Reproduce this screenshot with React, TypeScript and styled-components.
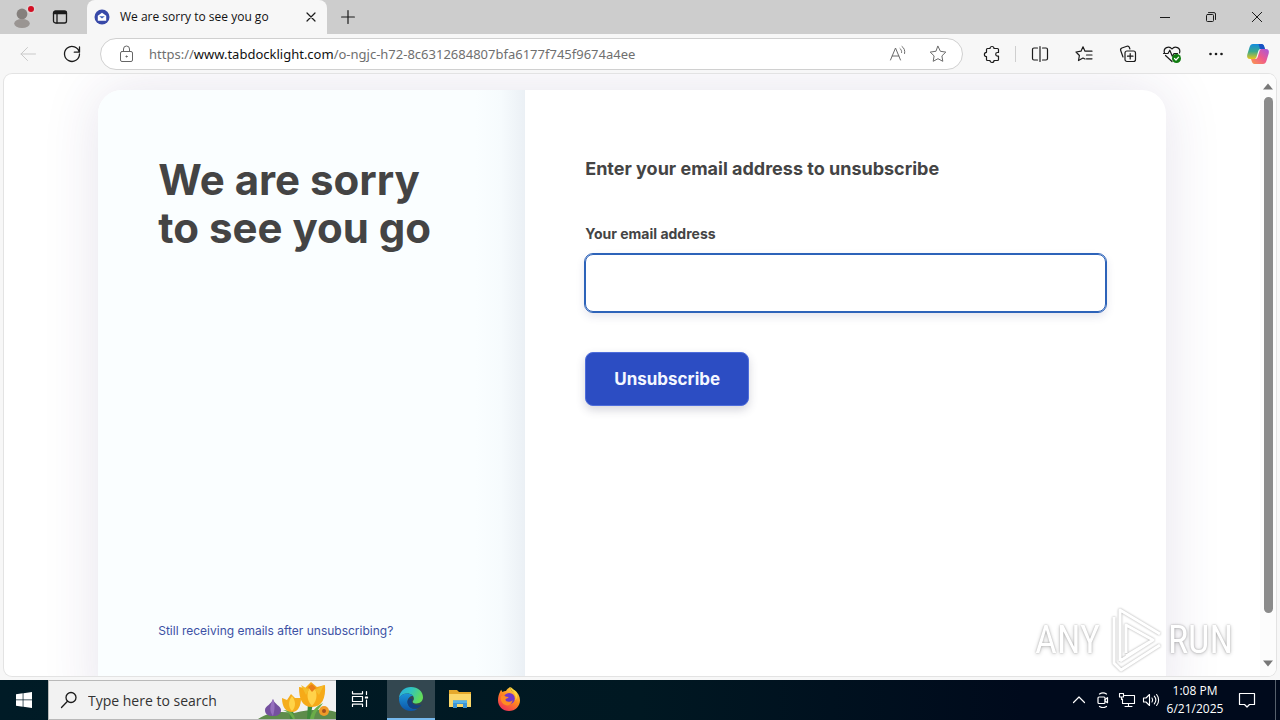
import React from "react";
import styled, { createGlobalStyle } from "styled-components";

const UI = `"Open Sans", "Noto Sans", sans-serif`;
const BODY = `Inter, "Liberation Sans", sans-serif`;

const GlobalStyle = createGlobalStyle`
  *, *::before, *::after { box-sizing: border-box; }
  body { margin: 0; background: #f7f7f7; }
  button, input { font: inherit; color: inherit; }
  button { background: none; border: 0; padding: 0; }
`;

const Desktop = styled.div`
  display: flex;
  flex-direction: column;
  height: 100vh;
  overflow: hidden;
  font-family: ${UI};
  color: #1b1b1b;
`;

/* ---------- browser chrome ---------- */

const TabStrip = styled.header`
  display: flex;
  height: 34px;
  flex: none;
  background: #cdcdcd;
`;

const IconButton = styled.button<{ $width?: number; $color?: string }>`
  display: flex;
  flex: none;
  align-items: center;
  justify-content: center;
  width: ${(p) => p.$width ?? 44}px;
  color: ${(p) => p.$color ?? "#1b1b1b"};
`;

const StripStart = styled.div`
  display: flex;
  width: 87px;
  padding-left: 2px;
`;

const Tab = styled.div`
  display: flex;
  align-items: center;
  gap: 10px;
  width: 240px;
  padding: 0 4px 0 7px;
  background: #f7f7f7;
  border-radius: 8px 8px 0 0;
`;

const TabTitle = styled.span`
  flex: 1;
  font-size: 12px;
  line-height: 16px;
  color: #111;
  white-space: nowrap;
`;

const WindowControls = styled.div`
  display: flex;
  margin-left: auto;
`;

const Toolbar = styled.nav`
  display: flex;
  height: 40px;
  flex: none;
  padding: 0 2px 0 6px;
  background: #f7f7f7;
`;

const AddressBar = styled.div`
  display: flex;
  flex: 1;
  min-width: 0;
  margin: 4px 7px 4px 6px;
  padding: 0 4px;
  background: #fff;
  border: 1px solid #d0d0d0;
  border-radius: 16px;
`;

const Url = styled.div`
  flex: 1;
  min-width: 0;
  overflow: hidden;
  font-family: "Noto Sans", "Open Sans", sans-serif;
  font-size: 13px;
  line-height: 30px;
  color: #6f6f6f;
  white-space: nowrap;
`;

const Host = styled.span`
  color: #111;
`;

const Separator = styled.span`
  width: 1px;
  height: 16px;
  margin: 12px 2px 0 1px;
  background: #cfcfcf;
`;

/* ---------- page ---------- */

const Viewport = styled.div`
  display: flex;
  flex: 1;
  min-height: 0;
  margin: 0 4px 4px;
  overflow: hidden;
  background: #fff;
  border-radius: 8px;
  box-shadow: 0 0 0 1px #e3e3e3;
`;

const Page = styled.main`
  display: flex;
  flex: 1;
  flex-direction: column;
  align-items: center;
  padding-top: 16px;
  overflow: hidden;
  font-family: ${BODY};
  color: #444;
`;

const Card = styled.section`
  display: grid;
  grid-template-columns: 2fr 3fr;
  flex: none;
  width: 85%;
  min-height: 632px;
  overflow: hidden;
  background: #fff;
  border-radius: 24px;
  box-shadow: 0 0 56px rgba(60, 40, 110, 0.13);
`;

const Intro = styled.div`
  display: flex;
  flex-direction: column;
  justify-content: space-between;
  align-items: flex-start;
  padding: 66px 60px 82px;
  background: linear-gradient(to left, #ebf0f5, #f6fbfd 24px, #fafeff 50px);
`;

const Heading = styled.h1`
  margin: 0;
  font-size: 42px;
  font-weight: 700;
  line-height: 48px;
  white-space: nowrap;
`;

const HelpLink = styled.a`
  font-size: 12px;
  line-height: 18px;
  color: #3c51a4;
  text-decoration: none;
`;

const Form = styled.form`
  padding: 66px 60px;
`;

const FormTitle = styled.h2`
  margin: 0 0 42px;
  font-size: 18px;
  font-weight: 700;
  line-height: 26px;
`;

const Label = styled.label`
  display: block;
  margin-bottom: 10px;
  font-size: 14px;
  font-weight: 700;
  line-height: 20px;
`;

const EmailInput = styled.input`
  display: block;
  width: 100%;
  height: 58px;
  padding: 0 20px;
  background: #fff;
  border: 1px solid #2d63b9;
  border-radius: 8px;
  outline: 1px solid #2d63b9;
  font-size: 16px;
  box-shadow: 0 4px 10px rgba(50, 50, 110, 0.14);
`;

const Submit = styled.button`
  height: 54px;
  margin-top: 40px;
  padding: 0 28px;
  background: #2c4dc3;
  border: 1px solid #4e6ddb;
  border-radius: 8px;
  box-shadow: 0 4px 10px rgba(50, 50, 80, 0.2);
  color: #f4f7ff;
  font-size: 17px;
  font-weight: 700;
`;

const ScrollTrack = styled.div`
  display: flex;
  flex-direction: column;
  align-items: center;
  flex: none;
  width: 16px;
  padding: 9px 0;
  background: #fcfcfc;
`;

const ScrollThumb = styled.div`
  flex: 11;
  width: 9px;
  margin-top: 7px;
  background: #8b8b8b;
  border-radius: 5px;
`;

const ScrollRest = styled.div`
  flex: 1;
`;

/* ---------- watermark ---------- */

const Watermark = styled.div`
  position: fixed;
  right: 47px;
  bottom: 47px;
  display: flex;
  align-items: center;
  gap: 4px;
  font-family: "Liberation Sans Narrow", "Roboto Condensed", Roboto, sans-serif;
  font-size: 38px;
  line-height: 64px;
  color: #fff;
  text-shadow: 0 0 2px rgba(0, 0, 0, 0.3), 0 1px 4px rgba(0, 0, 0, 0.22);
  pointer-events: none;
`;

const MarkSvg = styled.svg`
  filter: drop-shadow(0 0 1px rgba(0, 0, 0, 0.35));
`;

/* ---------- taskbar ---------- */

const Taskbar = styled.footer`
  display: flex;
  height: 40px;
  flex: none;
  background: linear-gradient(to right, #001b26, #001822 50%, #000a1c 80%);
`;

const SearchBox = styled.label`
  display: flex;
  align-items: center;
  width: 288px;
  padding-left: 11px;
  overflow: hidden;
  background: #f2f2f2;
  border: 1px solid #b9b9b9;
  border-right: 0;
`;

const SearchInput = styled.input`
  flex: 1;
  min-width: 0;
  margin-left: 10px;
  padding: 0;
  background: none;
  border: 0;
  font-size: 14px;
  &::placeholder { color: #333; opacity: 1; }
`;

const AppButton = styled.button<{ $active?: boolean }>`
  display: flex;
  align-items: center;
  justify-content: center;
  width: 48px;
  margin-right: 1px;
  background: ${(p) => (p.$active ? "#334750" : "transparent")};
  border-bottom: 2px solid ${(p) => (p.$active ? "#76b9ed" : "transparent")};
  color: #fff;
`;

const TaskViewButton = styled(AppButton)`
  margin-right: 3px;
`;

const Tray = styled.div`
  display: flex;
  margin-left: auto;
  color: #fff;
`;

const Clock = styled.time`
  display: flex;
  flex-direction: column;
  align-items: center;
  width: 64px;
  padding-top: 2px;
  font-size: 12px;
  line-height: 18px;
  white-space: nowrap;
`;

const ShowDesktop = styled.button`
  width: 5px;
  margin-left: 8px;
  border-left: 1px solid #56606c;
`;

/* ---------- icons ---------- */

type IconProps = { size?: number; sw?: number; children: React.ReactNode };
const Icon = ({ size = 20, sw = 1, children }: IconProps) => (
  <svg width={size} height={size} viewBox={`0 0 ${size} ${size}`} fill="none" stroke="currentColor"
    strokeWidth={sw} strokeLinecap="round" strokeLinejoin="round" aria-hidden="true">
    {children}
  </svg>
);

const STAR = "M10 2.3l2.4 5 5.4.8-3.9 3.8.9 5.4-4.8-2.6-4.8 2.6.9-5.4L2.2 8.1l5.4-.8z";

const ProfileIcon = () => (
  <svg width="34" height="34" viewBox="0 0 34 34" aria-hidden="true">
    <circle cx="17" cy="14" r="5.4" fill="#85807d" />
    <ellipse cx="17" cy="23.500" rx="7.800" ry="4.500" fill="#9a9592" />
    <circle cx="26" cy="9" r="4.500" fill="#dcd3d3" />
    <circle cx="26" cy="9" r="3" fill="#d30f24" />
  </svg>
);

const Favicon = () => (
  <svg width="16" height="16" viewBox="0 0 16 16" aria-hidden="true">
    <circle cx="8" cy="8" r="7.500" fill="#3849a8" />
    <path d="M3.800 6.800L8 3.800l4.200 3v5H3.800z" fill="#fff" />
    <path d="M5.200 7.200h5.600L8 9.600z" fill="#3f62b8" />
  </svg>
);

const CopilotIcon = () => (
  <svg width="24" height="24" viewBox="0 0 24 24" aria-hidden="true">
    <defs>
      <linearGradient id="cpA" x1="0" y1="0" x2="0" y2="1">
        <stop offset="0" stopColor="#128be0" /><stop offset=".5" stopColor="#3ba98c" /><stop offset="1" stopColor="#e9c61b" />
      </linearGradient>
      <linearGradient id="cpB" x1="1" y1="0" x2="0" y2="1">
        <stop offset="0" stopColor="#a458e0" /><stop offset=".5" stopColor="#ef5a8b" /><stop offset="1" stopColor="#fb9a4c" />
      </linearGradient>
    </defs>
    <path d="M7 2h8.500c1.500 0 2.200 1 2.600 2.200L19 7h-4.200c-1.400 0-2.100.8-2.500 2l-1.800 6c-.4 1.400-1.200 2-2.500 2H4.200C1.500 17 .6 15 1.300 12.500L3.600 5C4.200 3 5.300 2 7 2z" fill="url(#cpA)" />
    <path d="M12.500 2h3c1.500 0 2.200 1 2.600 2.200L19 7h-5z" fill="#1852c4" />
    <path d="M17 22H8.500c-1.500 0-2.200-1-2.600-2.200L5 17h4.200c1.400 0 2.100-.8 2.500-2l1.800-6c.4-1.400 1.200-2 2.500-2h3.800c2.700 0 3.600 2 2.900 4.500L20.400 19c-.6 2-1.700 3-3.400 3z" fill="url(#cpB)" />
  </svg>
);

const EdgeIcon = () => (
  <svg width="26" height="26" viewBox="0 0 26 26" aria-hidden="true">
    <defs>
      <linearGradient id="edA" x1="0" y1="0" x2="1" y2=".4">
        <stop offset="0" stopColor="#2aa9e0" /><stop offset=".5" stopColor="#2fc4c0" /><stop offset="1" stopColor="#62dc5a" />
      </linearGradient>
      <linearGradient id="edB" x1="0" y1="0" x2="0" y2="1">
        <stop offset="0" stopColor="#1b93d8" /><stop offset="1" stopColor="#0d55a8" />
      </linearGradient>
    </defs>
    <path d="M1 12C1.500 5.500 6.500 1 13 1c7 0 12 4.800 12 10.300 0 3.900-2.900 6.200-6.300 6.200-2.500 0-4-.9-4-1.800 0-.8 1.200-1.200 1.200-3.200C15.900 9.800 13 7.500 9.500 7.500 5.500 7.500 2.500 9.500 1 12z" fill="url(#edA)" />
    <path d="M1 12c1.500-3 4.600-4.500 8.300-4.500 2.700 0 4.700 1 5.800 2.500-2.200-.3-5.600 1.700-5.600 5.700 0 4.800 4.600 8.800 10.500 6.800C18 24.200 15.500 25 13 25 5.500 25 .6 19 1 12z" fill="url(#edB)" />
    <path d="M9.500 15.700c0 4.800 4.600 8.300 9.800 6.300 2-.7 3.500-2.100 4.400-3.600-2.200 1.200-5.700 1.500-8.200-.1-2.300-1.500-2.300-3.700-1.300-5.400-2-.6-4.700.3-4.700 2.800z" fill="#123f83" />
  </svg>
);

const FolderIcon = () => (
  <svg width="24" height="22" viewBox="0 0 24 22" aria-hidden="true">
    <path d="M1 2h8l2 2h12v15H1z" fill="#e5a92c" />
    <path d="M1 6h22v13H1z" fill="#fbd769" />
    <path d="M5 20v-7.500h14V20h-4v-4H9v4z" fill="#3d94d4" />
    <path d="M5 12.500h14V15H5z" fill="#57b2e8" />
  </svg>
);

const FirefoxIcon = () => (
  <svg width="24" height="26" viewBox="0 0 24 26" aria-hidden="true">
    <defs>
      <linearGradient id="ffA" x1=".8" y1="0" x2=".2" y2="1">
        <stop offset="0" stopColor="#ffe34a" /><stop offset=".45" stopColor="#ff8b1e" /><stop offset="1" stopColor="#ef2a5c" />
      </linearGradient>
    </defs>
    <path d="M3 6c.2-1 .7-1.800 1.300-2.300.2 1 .6 1.700 1.200 2.200C6.800 5 8 4.800 9 4.900c1-1.900 2.600-3.300 4.600-3.900-.4 2.500 1.300 3.500 3 5 .6-.5.800-1.300.7-2 3.500 2.300 5.700 6 5.700 10.200C23 20.200 18.200 25 12 25S1 20.200 1 14.200C1 11 1.800 8.300 3 6z" fill="url(#ffA)" />
    <circle cx="12.200" cy="12.500" r="5.600" fill="#7138c8" />
    <path d="M4 10.500c1.500-1.500 3.500-1.300 5 .2 1.300-.1 2.400.2 2.700.8-1 1-2.500.9-3.300 2 .3 2.500 4.300 3.200 7.300.7-1 4.500-4.600 6-7.500 4.800C4.500 17.500 3.200 14 4 10.500z" fill="#ff8c22" />
    <path d="M13.600 1c-.4 2.500 1.300 3.500 3 5 2.400 2.500 2.700 5.800 1.600 8.200 2-1.500 2.600-5.200.8-8.700" fill="#ffd83d" />
  </svg>
);

const CrocusArt = () => (
  <svg width="80" height="38" viewBox="0 0 80 38" aria-hidden="true">
    <path d="M2 38c12-8 24-8 36-6 16-4 32-4 42-1v7z" fill="#5e8c4b" />
    <path d="M17 18c1 5 8 7 8 11 0 4-3 6-8 6s-8-2-8-6c0-4 7-6 8-11z" fill="#75509f" />
    <path d="M17 18c3 7 1 13 0 17-4-5-3-11 0-17z" fill="#9670be" />
    <path d="M34 38l-1-10h4l1 10zM51 38l1-16h5l-3 16z" fill="#3f8a3b" />
    <path d="M37 38c-3-5-6-8-10-9 7 0 11 3 12 9zM54 38c2-9 7-13 13-16-3 5-8 8-9 16z" fill="#6aad48" />
    <path d="M26 17l5 2 4-6 4 4 6 0c0 8-3 14-9 14S26 26 26 17z" fill="#f5ad1d" />
    <path d="M36 15c4 5 4 11 0 15-4-4-4-10 0-15z" fill="#ffd348" />
    <path d="M43 6l6 1 6-6 6 5 8-2c1 13-3 22-13 22S43 18 43 6z" fill="#f6aa18" />
    <path d="M56 3c6 7 6 16 0 22-6-6-6-15 0-22z" fill="#ffd24a" />
    <path d="M45 4l8 5-3 5zM68 4l-9 5 4 5z" fill="#f4bd2b" />
    <path d="M52 6l4-3 4 4-4 4z" fill="#e87d18" />
    <circle cx="68" cy="30" r="5" fill="#f09a28" />
    <circle cx="68" cy="30" r="2" fill="#a7521e" />
  </svg>
);

const PlayMark = () => (
  <MarkSvg width="60" height="66" viewBox="0 0 60 66" fill="none" stroke="#fff" strokeWidth="3" strokeLinejoin="round" aria-hidden="true">
    <path d="M16 54V3l40 24M10 10v46l7 7 39-25M22 46V18l27 15-27 16M16 54l33-21" />
  </MarkSvg>
);

export default function App() {
  return (
    <Desktop>
      <GlobalStyle />
      <TabStrip>
        <StripStart>
          <IconButton $width={40} aria-label="Profile"><ProfileIcon /></IconButton>
          <IconButton $width={36} aria-label="Tab actions">
            <Icon size={16} sw={1.3}><rect x="1.500" y="2" width="13" height="12" rx="2" /><path d="M1.500 4.500h13M5 4.500V14" /><path d="M2.500 3h11" strokeWidth="2" /></Icon>
          </IconButton>
        </StripStart>
        <Tab>
          <Favicon />
          <TabTitle>We are sorry to see you go</TabTitle>
          <IconButton $width={24} aria-label="Close tab"><Icon size={10} sw={1.2}><path d="M1 1l8 8M9 1L1 9" /></Icon></IconButton>
        </Tab>
        <IconButton $width={42} aria-label="New tab"><Icon size={14} sw={1.2}><path d="M7 .6v12.800M.6 7h12.800" /></Icon></IconButton>
        <WindowControls>
          <IconButton $width={46} aria-label="Minimize"><Icon size={10}><path d="M0 5.500h10" /></Icon></IconButton>
          <IconButton $width={46} aria-label="Restore"><Icon size={10}><rect x=".5" y="2.500" width="7" height="7" rx="1" /><path d="M2.500.6H8A1.500 1.500 0 0 1 9.500 2v5.500" /></Icon></IconButton>
          <IconButton $width={46} aria-label="Close"><Icon size={10}><path d="M.3.3l9.400 9.400M9.700.3L.3 9.700" /></Icon></IconButton>
        </WindowControls>
      </TabStrip>

      <Toolbar aria-label="Browser toolbar">
        <IconButton $color="#c9c9c9" aria-label="Back"><Icon><path d="M17.500 10H3M9.500 3.500L3 10l6.500 6.500" /></Icon></IconButton>
        <IconButton aria-label="Refresh"><Icon sw={1.3}><path d="M17.300 8.200A7.500 7.500 0 1 0 17.500 10M17.500 3v5.200h-5.200" /></Icon></IconButton>
        <AddressBar>
          <IconButton $color="#666" aria-label="Site information"><Icon size={18}><rect x="2.500" y="6.500" width="12" height="10" rx="1.500" /><path d="M5.500 6.500V4a3 3 0 0 1 6 0v2.500" /><circle cx="8.500" cy="11.500" r=".6" fill="currentColor" /></Icon></IconButton>
          <Url>https://<Host>www.tabdocklight.com</Host>/o-ngjc-h72-8c6312684807bfa6177f745f9674a4ee</Url>
          <IconButton $width={40} $color="#6b6b6b" aria-label="Read aloud"><Icon><path d="M2.500 16L7.500 4l5 12M4.200 12h6.600M12 4.500c1.300 1 1.800 2.500 1.600 4M14 2.500c2.200 1.500 3.200 4 2.600 7" /></Icon></IconButton>
          <IconButton $width={40} $color="#6b6b6b" aria-label="Add to favorites"><Icon><path d={STAR} /></Icon></IconButton>
        </AddressBar>
        <IconButton aria-label="Extensions"><Icon sw={1.2}><path d="M8 4.500a2 2 0 0 1 4 0h3.500A1 1 0 0 1 16.500 5.500V8.500h-1a1.800 1.800 0 0 0 0 3.600h1v3.400a1 1 0 0 1-1 1H12a2 2 0 0 1-4 0H5.500a1 1 0 0 1-1-1v-3a2.100 2.100 0 0 1 0-4.200V5.500a1 1 0 0 1 1-1z" /></Icon></IconButton>
        <Separator />
        <IconButton aria-label="Split screen"><Icon sw={1.2}><path d="M7.500 4H4a1.500 1.500 0 0 0-1.500 1.500v9A1.500 1.500 0 0 0 4 16h3.500M12.500 4H16a1.500 1.500 0 0 1 1.500 1.500v9A1.500 1.500 0 0 1 16 16h-3.500M10 2.500v15" /></Icon></IconButton>
        <IconButton aria-label="Favorites"><Icon sw={1.2}><path d="M11 15l-2-1-4.500 2.500.9-5L2 8l5-.8L9 2.800l2 4.400h7M12.500 11H18M12.500 14.800H18" /></Icon></IconButton>
        <IconButton aria-label="Collections"><Icon sw={1.2}><rect x="7" y="7" width="10.500" height="10.500" rx="2" /><path d="M12.200 9.500v5.500M9.500 12.200H15M5 13l-2.300-6.500a2 2 0 0 1 1.200-2.500l5-1.700a2 2 0 0 1 2.500 1.200l.5 1.500" /></Icon></IconButton>
        <IconButton aria-label="Browser essentials">
          <Icon sw={1.2}><path d="M2.500 9C.8 4 7 1 10 5c3-4 9.200-1 7.500 4M3.500 11.500L10 17.500M1.500 9.500H6l1.800-3.300 2.500 6 1.700-2.700h3.500" /><circle cx="14.500" cy="14.500" r="4.500" fill="#107c10" stroke="none" /><path d="M12.500 14.500l1.500 1.500 2.600-2.800" stroke="#fff" /></Icon>
        </IconButton>
        <IconButton aria-label="Settings and more"><Icon><g fill="currentColor" stroke="none"><circle cx="4.500" cy="10" r="1.300" /><circle cx="10" cy="10" r="1.300" /><circle cx="15.500" cy="10" r="1.300" /></g></Icon></IconButton>
        <IconButton $width={40} aria-label="Copilot"><CopilotIcon /></IconButton>
      </Toolbar>

      <Viewport>
        <Page>
          <Card>
            <Intro>
              <Heading>We are sorry<br />to see you go</Heading>
              <HelpLink href="#help">Still receiving emails after unsubscribing?</HelpLink>
            </Intro>
            <Form onSubmit={(e) => e.preventDefault()}>
              <FormTitle>Enter your email address to unsubscribe</FormTitle>
              <Label htmlFor="email">Your email address</Label>
              <EmailInput id="email" type="email" />
              <Submit type="submit">Unsubscribe</Submit>
            </Form>
          </Card>
        </Page>
        <ScrollTrack aria-hidden="true">
          <svg width="10" height="7" viewBox="0 0 10 7"><path d="M0 6.500L5 .5l5 6z" fill="#777" /></svg>
          <ScrollThumb />
          <ScrollRest />
          <svg width="10" height="7" viewBox="0 0 10 7"><path d="M0 .5h10l-5 6z" fill="#777" /></svg>
        </ScrollTrack>
      </Viewport>

      <Taskbar>
        <IconButton $width={48} $color="#fff" aria-label="Start">
          <svg width="16" height="16" viewBox="0 0 16 16" fill="currentColor"><path d="M0 2.200l6.700-.9v6.300H0zM7.400 1.200L16 0v7.600H7.400zM0 8.300h6.700v6.400L0 13.800zM7.400 8.300H16V16l-8.600-1.200z" /></svg>
        </IconButton>
        <SearchBox>
          <Icon size={18} sw={1.3}><circle cx="11" cy="6.500" r="5" /><path d="M7.500 10.200L1.500 16.500" /></Icon>
          <SearchInput type="text" placeholder="Type here to search" aria-label="Search" />
          <CrocusArt />
        </SearchBox>
        <TaskViewButton aria-label="Task view">
          <Icon size={18} sw={1.2}><path d="M1.500 1.500v2.300h10V1.500M1.500 16.500v-2.300h10v2.300M1.500 6.500h10v5h-10zM15.500 1.500v3M15.500 10v6.500" /><path d="M14.500 7h2v1h-2z" /></Icon>
        </TaskViewButton>
        <AppButton $active aria-label="Microsoft Edge"><EdgeIcon /></AppButton>
        <AppButton aria-label="File Explorer"><FolderIcon /></AppButton>
        <AppButton aria-label="Firefox"><FirefoxIcon /></AppButton>
        <Tray>
          <IconButton $width={24} $color="#fff" aria-label="Show hidden icons"><Icon size={14} sw={1.2}><path d="M1.500 9.500L7 4l5.500 5.500" /></Icon></IconButton>
          <IconButton $width={24} $color="#fff" aria-label="Meet now"><Icon size={16} sw={1.2}><rect x="3" y="5" width="7" height="6.500" rx="1" /><path d="M10 7.500l2.500-1.800v5L10 9M4.500 2c2-1.300 5-1.300 7 0M4.500 14.500c2 1.300 5 1.300 7 0" /></Icon></IconButton>
          <IconButton $width={24} $color="#fff" aria-label="Network"><Icon size={18} sw={1.1}><path d="M6.500 4.500h10v8h-12V8M10.500 12.500v3M7 15.500h7M1.500 2.500h4V6h-4zM3.500 6v2.500" /></Icon></IconButton>
          <IconButton $width={24} $color="#fff" aria-label="Volume"><Icon size={18} sw={1.1}><path d="M1.500 7H4l3.500-3.500v11L4 11H1.500zM10 7c.8 1.200.8 2.800 0 4M12.300 5.200c1.800 2.200 1.800 5.400 0 7.600M14.600 3.500c2.700 3.200 2.700 7.800 0 11" /></Icon></IconButton>
          <Clock><span>1:08 PM</span><span>6/21/2025</span></Clock>
          <IconButton $width={40} $color="#fff" aria-label="Notifications"><Icon size={18} sw={1.2}><path d="M1.500 2.500h15v11H11.500L9 16l-2.500-2.500h-5z" /></Icon></IconButton>
          <ShowDesktop aria-label="Show desktop" />
        </Tray>
      </Taskbar>

      <Watermark><span>ANY</span><PlayMark /><span>RUN</span></Watermark>
    </Desktop>
  );
}
